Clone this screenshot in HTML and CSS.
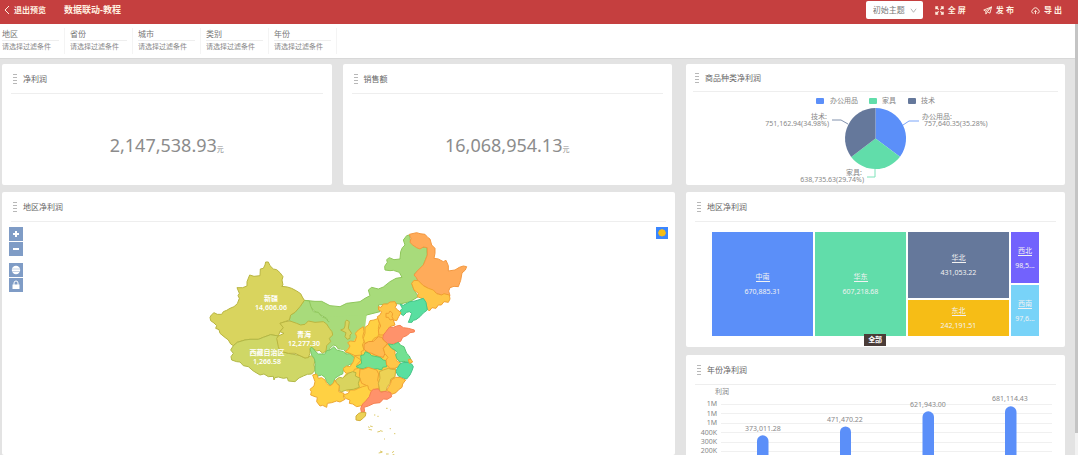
FILE: index.html
```html
<!DOCTYPE html>
<html lang="zh-CN">
<head>
<meta charset="utf-8">
<title>数据联动-教程</title>
<link rel="stylesheet" href="styles.css">
</head>
<body>
<header class="topbar">
  <button class="bar-btn back" type="button"><svg class="icon-back" viewBox="0 0 6 10"><path d="M5 1 1 5l4 4"/></svg>退出预览</button>
  <h1 class="page-title">数据联动-教程</h1>
  <div class="actions">
    <div class="theme">
      <select class="theme-select" aria-label="主题"><option>初始主题</option></select>
      <svg class="chevron" viewBox="0 0 8 8"><path d="m1 2 3 4 3-4"/></svg>
    </div>
    <button class="bar-btn" type="button"><svg class="icon bold" viewBox="0 0 10 10"><path d="M1 3.500V1h2.500M1 1l3 3M6.500 1H9v2.500M9 1 6 4M1 6.500V9h2.500M1 9l3-3M9 6.500V9H6.500M9 9 6 6"/></svg>全 屏</button>
    <button class="bar-btn" type="button"><svg class="icon" viewBox="0 0 10 10"><path d="M9.5 1 .8 4.5l2.4 1.2L9.5 1 7.7 8 4.8 6.4 9.5 1M3.2 5.7V9l1.6-2.6"/></svg>发 布</button>
    <button class="bar-btn" type="button"><svg class="icon" viewBox="0 0 10 10"><path d="M3 8H2.4a2 2 0 0 1-.2-3.9 2.9 2.9 0 0 1 5.6 0A2 2 0 0 1 7.6 8H7M5 9V5M3.6 6.4 5 5l1.4 1.4"/></svg>导 出</button>
  </div>
</header>
<div class="shell">
<div class="page">
  <form class="filters">
    <div class="filter"><label for="f1">地区</label><input id="f1" placeholder="请选择过滤条件"></div>
    <div class="filter"><label for="f2">省份</label><input id="f2" placeholder="请选择过滤条件"></div>
    <div class="filter"><label for="f3">城市</label><input id="f3" placeholder="请选择过滤条件"></div>
    <div class="filter"><label for="f4">类别</label><input id="f4" placeholder="请选择过滤条件"></div>
    <div class="filter"><label for="f5">年份</label><input id="f5" placeholder="请选择过滤条件"></div>
  </form>
  <main class="board">
    <div class="col">
      <div class="kpis">
        <section class="card kpi">
          <h2 class="card-title"><span class="grip"></span>净利润</h2>
          <p class="value">2,147,538.93<small>元</small></p>
        </section>
        <section class="card kpi">
          <h2 class="card-title"><span class="grip"></span>销售额</h2>
          <p class="value">16,068,954.13<small>元</small></p>
        </section>
      </div>
      <section class="card map-card">
        <h2 class="card-title"><span class="grip"></span>地区净利润</h2>
        <div class="map-body">
          <svg class="chart" viewBox="2 222 673 233" role="img" aria-label="地区净利润地图">
            <g transform="scale(.33333)" class="regions">
              <g transform="translate(1020 675)">
                <path class="lime" d="M-107 226-75 229-55 229-30 242 0 245 20 235 60 230 75 220 90 212 85 195 95 187 115 192 130 186 150 170 168 160 186 157 178 142 160 136 150 137 135 135 134 124 142 112 140 104 148 98 162 104 180 102 182 80 187 68 195 60 190 45 200 32 208 30 212 50 230 68 260 67 262 90 250 120 225 145 235 170 215 175 222 195 235 215 210 230 180 237 160 235 115 240 120 260 80 270 60 290 45 345 28 340 20 310-5 290-30 310-40 280-75 260Z"/>
                <path class="orange2" d="M208 28 230 23 240 26 255 28 264 38 270 42 275 60 285 70 285 85 282 100 295 102 310 110 318 106 325 122 325 138 345 135 358 127 370 123 380 125 376 135 366 144 362 166 355 185 342 184 330 188 326 198 330 212 305 210 290 205 265 190 250 182 235 170 229 158 222 150 232 138 240 130 250 120 256 106 262 90 262 68 250 66 240 72 230 68 218 60 210 52 213 40Z"/>
                <path class="amber" d="M215 175 222 166 235 167 250 182 265 190 280 195 290 206 305 210 312 206 328 210 330 222 325 232 312 230 304 240 295 240 288 250 276 248 268 258 262 252 256 230 250 222 232 215 235 205 222 195Z"/>
                <path class="teal" d="M180 237 190 241 210 230 225 228 250 220 258 232 262 255 250 264 240 275 228 284 220 286 216 292 205 292 210 280 215 265 208 260 200 262 190 272 182 266 180 258 187 250Z"/>
              </g>
              <g transform="translate(600 675)">
                <path class="lime" d="M313 226 328 228 333 245 340 260 355 262 365 275 378 280 385 290 398 290 405 282 414 290 413 303 410 315 425 318 430 325 440 345 460 340 465 350 440 385 430 372 415 372 408 362 400 360 390 370 388 385 340 370 268 285 272 270 285 262 300 245Z"/>
              </g>
              <g transform="translate(900 900)">
                <path class="lime-fill" d="M85 50 200 45 195 85 160 150 125 150 100 130Z"/>
                <path class="yellow-fill" d="M140 150 170 110 195 85 238 62 262 100 255 130 280 150 290 190 285 235 250 270 205 272 140 275 125 240 158 185Z"/>
              </g>
              <g transform="translate(600 675)">
                <path class="olive" d="M205 111 210 122 220 132 230 134 240 143 249 155 246 165 249 180 245 184 262 186 275 190 290 198 302 206 307 216 313 226 300 245 285 262 272 270 268 285 240 295 250 307 240 320 235 333 212 329 190 337 175 343 150 343 135 345 112 352 100 362 92 357 85 345 72 335 60 325 57 314 47 310 50 302 42 294 32 287 30 277 34 270 42 263 52 268 65 268 70 260 80 256 90 250 102 245 112 236 118 220 114 212 118 205 111 188 128 188 141 183 141 170 149 150 162 154 180 152 181 132 190 130 195 120 197 111Z"/>
                <path class="moss" d="M100 362 112 352 135 345 150 343 175 343 190 337 212 329 235 333 232 345 237 365 240 378 265 385 300 392 315 399 335 392 345 405 342 420 346 435 335 447 322 448 310 453 297 459 285 470 265 468 262 458 250 460 235 456 225 458 222 465 220 454 205 455 192 447 180 450 160 438 145 425 130 422 120 411 110 410 95 405 93 395 100 385 92 375Z"/>
                <path class="olive" d="M240 295 256 290 270 288 290 295 302 300 315 298 325 288 345 292 370 290 380 297 388 310 396 320 398 330 388 340 392 350 380 362 378 378 368 385 358 376 350 378 335 368 330 372 330 385 325 398 315 399 300 392 285 385 265 385 240 378 235 365 230 340 235 333 252 325 240 320 250 308Z"/>
              </g>
              <g transform="translate(900 900)">
                <path class="olive" d="M122 90 132 86 135 78 136 65 140 60 148 65 145 85 155 100 150 105 150 115 142 118 135 110 138 98Z"/>
                <path class="green" d="M30 145 36 142 45 153 55 162 75 162 80 152 90 150 102 140 110 150 130 155 138 162 150 161 165 175 160 190 145 195 140 206 130 210 128 222 120 225 105 235 100 250 90 256 80 245 75 232 65 225 48 230 45 210 46 190 43 175 35 165Z"/>
                <path class="yellow" d="M130 205 140 198 150 200 160 185 165 168 183 180 170 195 175 205 163 208 160 218 140 220 132 214Z"/>
                <path class="yellow" d="M135 155 145 148 150 138 143 128 152 123 165 125 170 110 166 100 175 90 190 80 192 95 188 110 192 125 187 135 192 150 183 155 185 165 165 167 150 160Z"/>
                <path class="yellow" d="M195 82 205 75 210 62 222 60 235 55 238 70 235 85 238 100 233 110 222 115 215 125 195 130 190 115 195 100Z"/>
                <path class="amber" d="M235 20 243 22 250 12 262 12 270 6 285 5 290 15 285 22 293 30 303 38 296 50 290 62 280 60 285 75 270 80 262 90 255 105 237 105 235 90 242 78 235 60 232 50 240 45 245 35 236 30Z"/>
                <path class="amber" d="M258 40 266 40 270 33 278 40 276 50 280 58 270 60 265 52 258 52Z"/>
                <path class="red" d="M250 105 258 95 268 82 280 82 290 78 300 76 310 83 325 85 343 90 343 96 330 98 322 106 308 112 302 124 290 128 275 133 260 130 252 122 248 115Z"/>
                <path class="amber2" d="M192 133 205 125 220 124 235 110 246 112 250 120 262 130 258 136 250 145 255 160 250 172 238 170 225 165 215 160 205 158 192 148Z"/>
                <path class="teal2" d="M182 167 192 164 196 155 208 160 215 167 240 172 250 180 258 182 260 200 248 202 245 210 232 206 220 208 200 202 190 206 180 205 168 200 185 190Z"/>
                <path class="amber" d="M250 145 257 138 262 132 275 145 285 152 285 160 295 175 290 182 303 190 298 198 285 205 270 205 260 195 258 180 264 172 254 160Z"/>
                <path class="teal2" d="M265 132 280 134 295 127 302 136 312 140 320 160 328 168 333 180 325 188 312 184 300 186 290 175 287 165 292 158 285 150 275 145Z"/>
                <path class="teal" d="M290 208 300 192 308 188 325 187 335 192 340 200 336 212 330 225 320 237 305 233 295 228 288 215Z"/>
                <path class="amber" d="M325 178 333 178 338 186 328 190Z"/>
                <path class="amber" d="M180 207 190 208 205 202 220 207 230 210 236 222 233 240 237 250 237 265 225 268 215 272 205 270 203 258 185 250 178 230Z"/>
                <path class="sand" d="M238 215 250 210 265 205 275 208 287 208 285 230 272 238 270 250 262 260 258 274 240 275 235 250 240 235Z"/>
                <path class="amber" d="M287 232 300 232 317 240 308 252 306 262 295 270 288 278 275 283 270 276 260 272 265 262 272 250 274 240Z"/>
                <path class="yellow" d="M130 285 145 280 150 270 165 270 175 265 188 260 203 256 206 268 215 275 208 290 200 300 195 314 180 318 170 320 158 312 148 310 150 300 136 295Z"/>
                <path class="red" d="M213 275 220 268 235 267 242 277 255 274 272 278 275 290 262 298 250 297 240 308 222 310 205 318 192 322 194 335 184 336 182 325 188 312 200 300 208 290Z"/>
                <path class="olive" d="M107 240 118 232 128 234 145 220 158 215 168 218 166 228 180 235 175 250 178 262 160 268 140 270 125 275 116 272 118 255 108 250Z"/>
                <path class="yellow" d="M38 225 50 222 55 235 65 233 75 240 80 250 90 258 100 250 104 240 110 250 118 258 116 275 132 280 130 292 135 298 120 306 110 303 95 308 82 310 80 322 68 316 60 318 50 305 52 292 45 290 32 285 34 275 30 268 42 258 45 245Z"/>
                <path class="sand" d="M168 348 176 340 186 337 198 338 196 348 188 356 180 362 168 360Z"/>
                <g class="isles"><path d="M222 345h4M232 349h4M258 325h5M270 330h3M204 380l5 3M210 378l8 2M206 388l10 2M232 396l8-2M240 392l8 2M269 386h4M282 401h4M252 417h3M236 459l10-2M240 453l8 3M258 462h8M276 458l6-4M278 464h5"/></g>
              </g>
            </g>
            <g class="map-labels">
              <text x="271" y="301">新疆</text><text x="271" y="310">14,606.06</text>
              <text x="304" y="337">青海</text><text x="304" y="346">12,277.30</text>
              <text x="267" y="355">西藏自治区</text><text x="267" y="364">1,266.58</text>
            </g>
          </svg>
          <div class="map-tools">
            <button type="button" aria-label="放大"><svg viewBox="0 0 14 14"><path class="stroke" d="M7 4v6M4 7h6"/></svg></button>
            <button type="button" aria-label="缩小"><svg viewBox="0 0 14 14"><path class="stroke" d="M4 7h6"/></svg></button>
            <button class="apart" type="button" aria-label="全图"><svg viewBox="0 0 14 14"><circle cx="7" cy="7" r="4.2"/><path class="grid-line" d="M3 6h8M3 8.5h8"/></svg></button>
            <button type="button" aria-label="锁定"><svg viewBox="0 0 14 14"><path d="M3.5 6.5h7V11h-7z"/><path class="shackle" d="M5 7V5a2 2 0 0 1 4 0v2"/></svg></button>
          </div>
          <button class="map-pick" type="button" aria-label="选择"><svg viewBox="0 0 12 12"><path d="m6 2 2.8 1.2L10 6 8.8 8.6 6 9.6 3.2 8.6 2 6l1.2-2.8z"/></svg></button>
        </div>
      </section>
    </div>
    <div class="col">
      <section class="card pie-card">
        <h2 class="card-title"><span class="grip"></span>商品种类净利润</h2>
        <svg class="chart" viewBox="686 93 379 92" role="img" aria-label="商品种类净利润">
          <g class="labels">
            <rect x="816" y="98" width="8" height="6" rx="1" fill="#5b8ff9"/><text x="830" y="103">办公用品</text>
            <rect x="869" y="98" width="8" height="6" rx="1" fill="#61ddaa"/><text x="882" y="103">家具</text>
            <rect x="908" y="98" width="8" height="6" rx="1" fill="#65789b"/><text x="921" y="103">技术</text>
          </g>
          <path fill="#5b8ff9" d="M875.500 138.500V108A30.500 30.500 0 0 1 900 156.700Z"/>
          <path fill="#61ddaa" d="M875.500 138.500 900 156.700A30.500 30.500 0 0 1 851.200 156.900Z"/>
          <path fill="#65789b" d="M875.500 138.500 851.200 156.900A30.500 30.500 0 0 1 875.500 108Z"/>
          <g class="leader">
            <path stroke="#5b8ff9" d="m903 125 6-4h10"/>
            <path stroke="#61ddaa" d="M875 169v8h-8"/>
            <path stroke="#65789b" d="m848 124-7-4h-9"/>
          </g>
          <g class="labels">
            <text x="922" y="119">办公用品:</text><text x="924" y="126">757,640.35(35.28%)</text>
            <text x="827" y="119" text-anchor="end">技术:</text><text x="829" y="126" text-anchor="end">751,162.94(34.98%)</text>
            <text x="862" y="175" text-anchor="end">家具:</text><text x="864" y="182" text-anchor="end">638,735.63(29.74%)</text>
          </g>
        </svg>
      </section>
      <section class="card tree-card">
        <h2 class="card-title"><span class="grip"></span>地区净利润</h2>
        <div class="tree">
          <div class="cell zn"><a href="#">中南</a><span>670,885.31</span></div>
          <div class="cell hd"><a href="#">华东</a><span>607,218.68</span></div>
          <div class="stack north">
            <div class="cell hb"><a href="#">华北</a><span>431,053.22</span></div>
            <div class="cell db"><a href="#">东北</a><span>242,191.51</span></div>
          </div>
          <div class="stack">
            <div class="cell xb"><a href="#">西北</a><span>98,5...</span></div>
            <div class="cell xn"><a href="#">西南</a><span>97,6...</span></div>
          </div>
        </div>
        <button class="crumb" type="button">全部</button>
      </section>
      <section class="card bar-card">
        <h2 class="card-title"><span class="grip"></span>年份净利润</h2>
        <svg class="chart" viewBox="686 385 379 150" role="img" aria-label="年份净利润">
          <path class="gridlines" d="M721 404.500h331M721 413.500h331M721 423.500h331M721 432.500h331M721 442.500h331M721 451.500h331"/>
          <g fill="#5b8ff9">
            <path d="M757 540v-99a5.500 5.500 0 0 1 11.500 0v99z"/>
            <path d="M840 540V432a5.500 5.500 0 0 1 11 0v108z"/>
            <path d="M922.500 540V417a5.500 5.500 0 0 1 11.500 0v123z"/>
            <path d="M1005 540V412a5.500 5.500 0 0 1 11.500 0v128z"/>
          </g>
          <g class="labels">
            <text x="715" y="394">利润</text>
            <g text-anchor="end"><text x="717" y="406">1M</text><text x="717" y="416">1M</text><text x="717" y="425">1M</text><text x="717" y="435">400K</text><text x="717" y="444">300K</text><text x="717" y="453">200K</text></g>
            <g text-anchor="middle"><text x="763" y="431">373,011.28</text><text x="845" y="422">471,470.22</text><text x="928" y="407">621,943.00</text><text x="1010" y="401">681,114.43</text></g>
          </g>
        </svg>
      </section>
    </div>
  </main>
</div>
<div class="scroll-track"><div class="scroll-thumb"></div></div>
</div>
</body>
</html>
```

FILE: styles.css
```css
* { box-sizing: border-box; }
body {
  margin: 0;
  height: 100vh;
  overflow: hidden;
  display: flex;
  flex-direction: column;
  font: 8px/12px "Noto Sans", "Noto Sans CJK SC", sans-serif;
  color: #777;
  background: #e3e3e3;
}
button, input, select { font: inherit; color: inherit; border: 0; padding: 0; margin: 0; background: none; }
h1, h2, p { margin: 0; }

.topbar {
  flex: none;
  height: 24px;
  padding: 0 16px 4px 4px;
  display: flex;
  align-items: center;
  background: #c53f3f;
  color: #fff0e0;
}
.bar-btn { display: flex; align-items: center; gap: 4px; font-weight: 700; white-space: pre; }
.icon-back { width: 6px; height: 10px; }
.icon { width: 9px; height: 9px; }
.icon, .icon-back { fill: none; stroke: currentColor; stroke-width: 1; }
.bold { stroke-width: 1.4; }
.page-title { margin-left: 18px; font-size: 9px; font-weight: 700; }
.actions { margin-left: auto; display: flex; align-items: center; gap: 17px; }
.theme { position: relative; margin-right: -5px; }
.theme-select {
  appearance: none;
  display: block;
  width: 57px;
  height: 18px;
  padding: 0 16px 0 7px;
  border-radius: 2px;
  background: #fff;
  color: #777;
}
.chevron { position: absolute; right: 6px; top: 6px; width: 7px; height: 7px; fill: none; stroke: #aaa; pointer-events: none; }

.shell { flex: 1; min-height: 0; display: flex; }
.page { flex: 1; min-width: 0; overflow: hidden; }
.scroll-track { width: 3px; background: #f2f2f2; }
.scroll-thumb { height: 95%; background: #c4c4c4; }

.filters { display: flex; gap: 5px; height: 35px; padding: 4px 0 4px 2px; background: #fff; border-bottom: 1px solid #d8d8d8; }
.filter { width: 63px; padding-right: 5px; border-right: 1px solid #f4f4f4; }
.filter label { display: block; border-bottom: 1px solid #eee; }
.filter input { display: block; width: 100%; height: 12px; font-size: 7px; outline: 0; }
.filter input::placeholder { color: #888; opacity: 1; }

.board { display: grid; grid-template-columns: 673fr 379fr; gap: 11px; padding: 5px 10px 0 2px; }
.col { display: flex; flex-direction: column; gap: 8px; min-width: 0; }
.col > :first-child { margin-bottom: -1px; }
.kpis { display: flex; gap: 11px; padding-right: 3px; }
.card { position: relative; background: #fff; border-radius: 2px; overflow: hidden; }
.card-title {
  display: flex;
  align-items: center;
  gap: 6px;
  height: 30px;
  margin: 0 9px;
  padding-left: 2px;
  border-bottom: 1px solid #eee;
  font-size: 8px;
  font-weight: 400;
  color: #666;
}
.grip { width: 4px; height: 10px; background: repeating-linear-gradient(#999 0 1px, transparent 1px 3px); opacity: .7; }
.chart { display: block; width: 100%; }
.chart text { font-size: 7px; }
.labels { fill: #888; }

.kpi { flex: 1; height: 121px; }
.value { padding-top: 35px; text-align: center; font-size: 18px; line-height: 32px; color: #8c8c8c; }
.value small { font-size: 7px; }

.map-body { position: relative; }
.regions path { stroke-width: 3; stroke-linejoin: round; }
.lime { fill: #a8db7b; stroke: #8fc65a; }
.lime-fill { fill: #a8db7b; }
.yellow-fill { fill: #ffcd45; }
.olive { fill: #d9d45e; stroke: #b9b540; }
.moss { fill: #cfd766; stroke: #b2b846; }
.green { fill: #93df84; stroke: #7ac764; }
.teal { fill: #58dfa0; stroke: #46c488; }
.teal2 { fill: #72e192; stroke: #55c774; }
.yellow { fill: #ffd143; stroke: #eda832; }
.sand { fill: #edd255; stroke: #d2ae3c; }
.amber { fill: #ffc648; stroke: #f0a030; }
.amber2 { fill: #ffb94e; stroke: #ec9632; }
.orange2 { fill: #ffab5a; stroke: #f3983f; }
.red { fill: #ff926b; stroke: #f57f50; }
.isles { fill: none; stroke: #dcc968; }
.map-labels { fill: #fff; text-anchor: middle; font-weight: 600; }
.map-tools { position: absolute; left: 7px; top: 5px; display: flex; flex-direction: column; gap: 1px; }
.map-tools button, .map-pick { display: block; width: 14px; height: 14px; background: #7f9cc6; }
.map-tools .apart { margin-top: 6px; }
.map-tools svg, .map-pick svg { display: block; fill: #fff; }
.stroke { stroke: #fff; stroke-width: 2; }
.grid-line { stroke: #c5d2e5; stroke-width: 1; }
.shackle { fill: none; stroke: #fff; stroke-width: 1; }
.map-pick { position: absolute; right: 7px; top: 5px; width: 12px; height: 12px; background: #3a86ff; }
.map-pick svg { fill: #f6bd16; }

.pie-card { height: 121px; }
.pie-card .card-title { height: 28px; margin: 0 7px; }
.pie-card .chart { margin-top: 1px; }
.leader { fill: none; stroke-width: 1; opacity: .8; }

.tree-card { height: 155px; }
.tree { display: flex; gap: 2px; height: 104px; margin: 10px 26px 0; }
.cell { flex: 1; min-width: 0; min-height: 0; display: flex; flex-direction: column; align-items: center; justify-content: center; gap: 5px; font-size: 7px; line-height: 9px; color: #f2f2f2; }
.cell a { color: inherit; text-decoration: none; border-bottom: 1px solid currentColor; }
.stack { flex: 28; display: flex; flex-direction: column; gap: 2px; }
.north { flex: 101; }
.zn { flex: 101; background: #5b8ff9; }
.hd { flex: 91; background: #61ddaa; }
.hb { flex: 66; background: #65789b; }
.db { flex: 36; background: #f6bd16; }
.xb { background: #7262fd; }
.xn { background: #78d3f8; }
.crumb { position: absolute; left: 47%; bottom: 1px; width: 22px; height: 12px; background: #4a3c38; color: #fff; font-size: 7px; font-weight: 700; line-height: 12px; }

.gridlines { stroke: #f0f0f0; fill: none; }
```
